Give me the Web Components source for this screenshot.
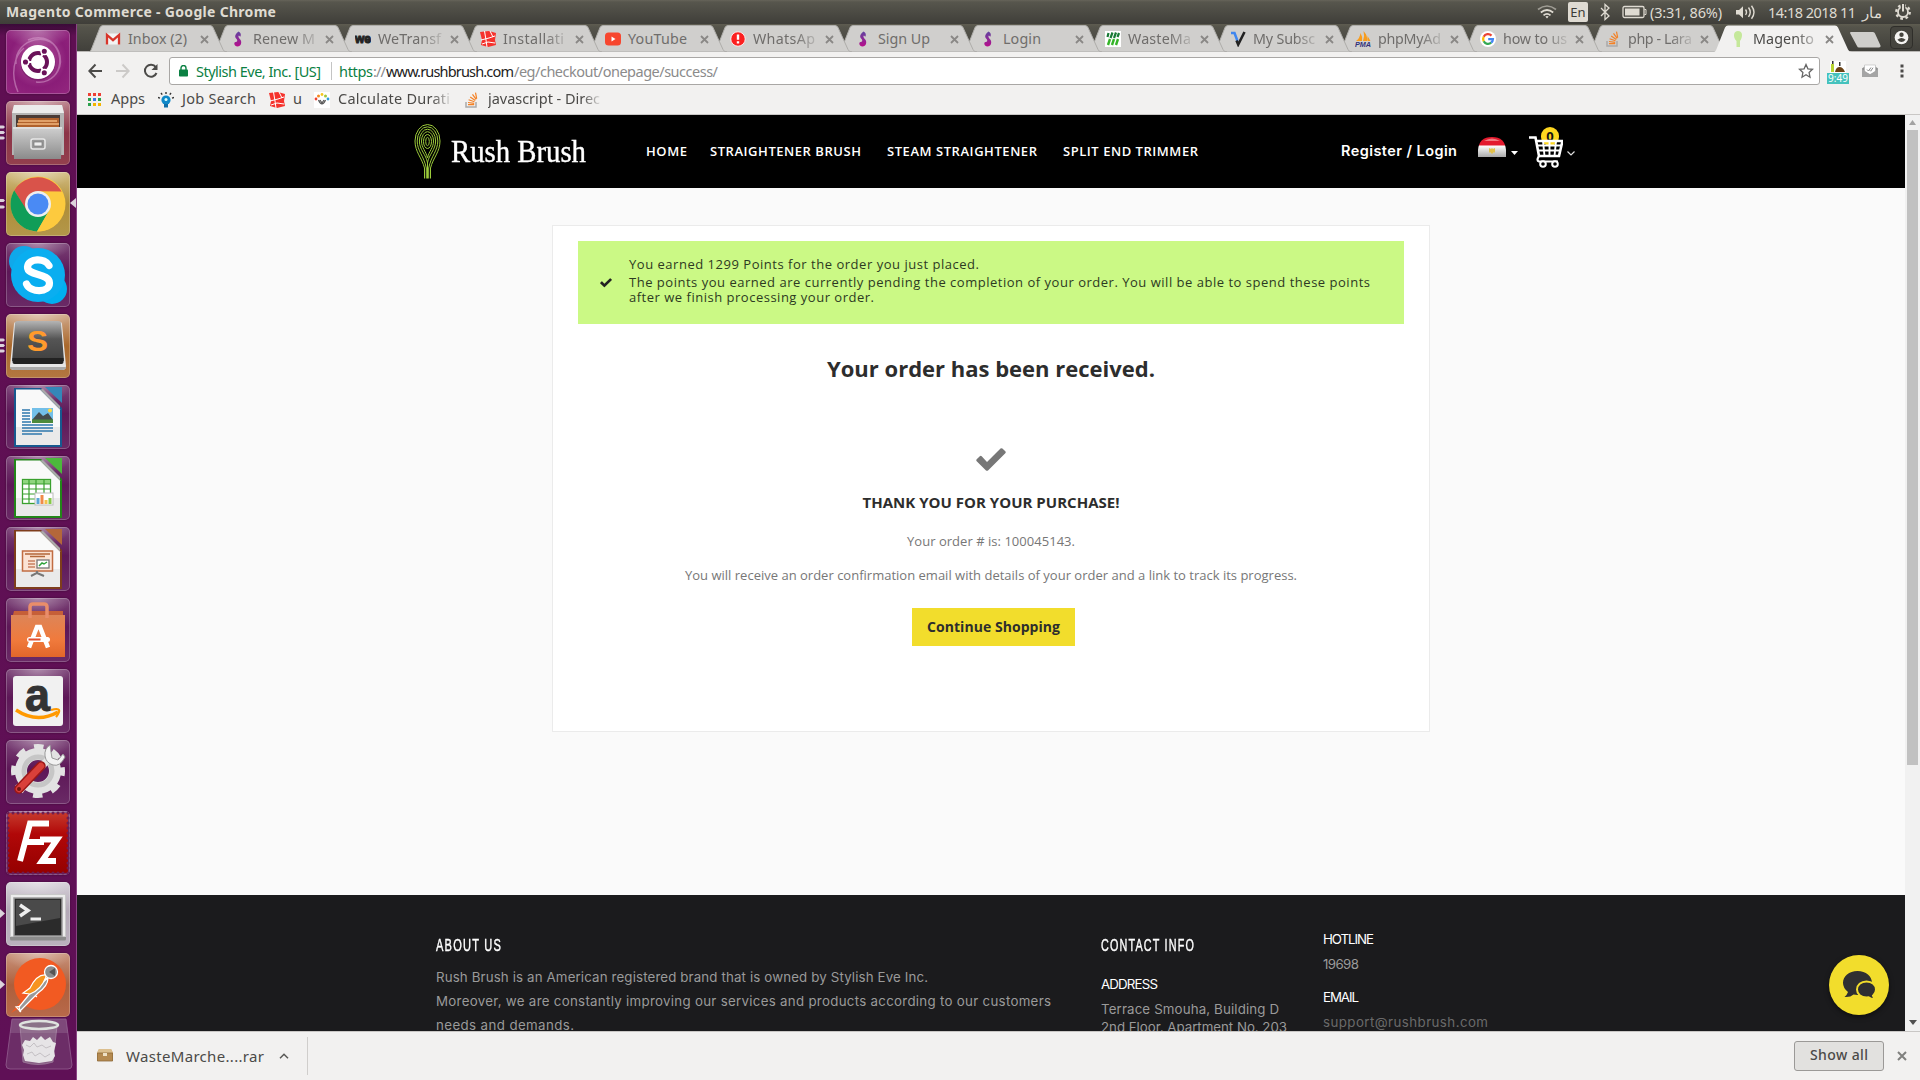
<!DOCTYPE html>
<html lang="en">
<head>
<meta charset="utf-8">
<title>Magento Commerce</title>
<style>
html,body{margin:0;height:100%;overflow:hidden}
body{font-family:"Noto Sans","Open Sans",sans-serif;background:#fafafa}
</style>
</head>
<body>
<desktop-shell></desktop-shell>
<script>
const def = (name, html, setup) => customElements.define(name, class extends HTMLElement {
  constructor() {
    super();
    this.attachShadow({mode: "open"}).innerHTML = html;
  }
  connectedCallback() { if (setup) setup(this, this.shadowRoot); }
});

/* ---------- shell ---------- */
def("desktop-shell", `
<style>
:host{display:flex;flex-direction:column;width:1920px;height:1080px;overflow:hidden}
.row{display:flex;flex:1;min-height:0}
.win{display:flex;flex-direction:column;flex:1;min-width:0}
.view{display:flex;flex:1;min-height:0;overflow:hidden}
.page{display:flex;flex-direction:column;flex:1;background:#fafafa;min-width:0}
main{height:707px;flex:none;display:flex;justify-content:center;align-items:flex-start;box-sizing:border-box;padding-top:37px}
</style>
<top-panel></top-panel>
<div class="row">
  <side-launcher></side-launcher>
  <div class="win">
    <tab-strip></tab-strip>
    <nav-toolbar></nav-toolbar>
    <bookmark-bar></bookmark-bar>
    <div class="view">
      <div class="page">
        <shop-header></shop-header>
        <main><order-card></order-card></main>
        <shop-footer></shop-footer>
      </div>
      <scroll-bar></scroll-bar>
    </div>
    <download-bar></download-bar>
  </div>
</div>`);

/* ---------- top panel ---------- */
def("top-panel", `
<style>
:host{display:flex;align-items:center;height:24px;flex:none;background:linear-gradient(#66645a 0,#57564d 2px,#3f3e39 24px);color:#dfdbd2;font-size:14.5px;line-height:24px}
svg{display:block;flex:none}
.t{margin-left:6px;font-weight:700;font-size:14px}
.en{margin-left:10px;width:20px;height:20px;border-radius:2px;background:#dfdbd2;color:#3c3b37;text-align:center;line-height:20px;font-size:13px}
</style>
<fit-text class="t" w="270">Magento Commerce - Google Chrome</fit-text>
<svg style="margin-left:1260px" width="22" height="24" viewBox="0 0 22 24" fill="none" stroke="#dfdbd2" stroke-width="1.700"><path d="M2 9.500Q11 2.500 20 9.500" opacity=".55"/><path d="M4.800 12.500Q11 7.500 17.200 12.500"/><path d="M7.500 15.300Q11 12.300 14.500 15.300"/><path d="M9.300 16.600L11 18.500 12.700 16.600Q11 15.200 9.300 16.600Z" fill="#dfdbd2" stroke="none"/></svg>
<div class="en"><span>En</span></div>
<svg style="margin-left:11px" width="12" height="24" viewBox="0 0 12 24" fill="none" stroke="#dfdbd2" stroke-width="1.300"><path d="M2 8l8 8-4 3.500V4.500L10 8 2 16"/></svg>
<svg style="margin-left:11px" width="26" height="24" viewBox="0 0 26 24"><rect x="1" y="6.500" width="21" height="11" rx="1.500" fill="none" stroke="#dfdbd2" stroke-width="1.300"/><rect x="3" y="8.500" width="14.500" height="7" fill="#dfdbd2"/><path d="M22.500 9.500h1.500v5h-1.500" stroke="#dfdbd2" fill="none"/></svg>
<fit-text style="margin-left:2px" w="72">(3:31, 86%)</fit-text>
<svg style="margin-left:13px" width="22" height="24" viewBox="0 0 22 24" fill="none" stroke="#dfdbd2" stroke-width="1.400"><path d="M1 10v4.500h3l4 3.800V6.200L4 10z" fill="#dfdbd2" stroke="none"/><path d="M10.500 9.500q2 2.700 0 5.400M13.500 7.500q3.500 4.700 0 9.400M16.500 5.700q5 6.500 0 13"/></svg>
<fit-text style="margin-left:11px" w="88">14:18 2018 11</fit-text>
<span style="margin-left:6px;width:21px;white-space:nowrap" lang="ar">مار</span>
<svg style="margin-left:10px" width="20" height="24" viewBox="0 0 20 24" fill="none" stroke="#dfdbd2"><circle cx="10" cy="12" r="6.700" stroke-width="2.400" stroke-dasharray="2.630 2.630"/><circle cx="10" cy="12" r="5" stroke-width="1.800"/><path d="M10 3.500v9" stroke="#4a4942" stroke-width="4.500"/><path d="M10 4v7.500" stroke-width="2"/></svg>`);

/* ---------- launcher ---------- */
def("launcher-tile", `
<style>
:host{display:block;position:relative;width:64px;height:64px;flex:none}
.b{width:64px;height:64px;border-radius:5px;background:var(--bg,linear-gradient(#7c4478,#5d1757 45%,#6a2a66));box-shadow:inset 0 0 0 1px rgba(255,255,255,.22),0 0 2px rgba(20,0,20,.5);overflow:hidden}
.g{position:absolute;inset:0;border-radius:5px;background:radial-gradient(ellipse 34px 18px at 50% 0,rgba(255,255,255,.38),rgba(255,255,255,0));}
::slotted(svg){position:relative;display:block}
.p{position:absolute;left:-7px;top:0;height:64px;width:7px}
.a{position:absolute;right:-6px;top:0}
</style>
<svg class="p" viewBox="0 0 7 64"></svg>
<div class="b"><div class="g"></div><slot></slot></div>
<svg class="a" width="6" height="64" viewBox="0 0 6 64"></svg>`, (el, r) => {
  const n = +el.getAttribute("pips") || 0;
  const ys = {0: [], 2: [28.500, 35], 3: [26, 31.500, 37]}[n];
  r.querySelector(".p").innerHTML = n === 1
    ? '<path d="M0 26v11l6-5.500z" fill="#dcd3dc"/>'
    : ys.map(y => `<path d="M0 ${y-1.6}h4.500l1.500 1.600-1.500 1.600H0z" fill="#dcd3dc"/>`).join("");
  if (el.hasAttribute("active")) r.querySelector(".a").innerHTML = '<path d="M6 26v10L0 31z" fill="#dcd3dc"/>';
});

const sheet = (c, d, inner) => `<svg width="64" height="64" viewBox="0 0 64 64"><path d="M8 3h27l21 20v39H8z" fill="${d}"/><path d="M10 4.500h24l20 20v35.500H10z" fill="#f9f9f9"/><path d="M10 42h44v18H10z" fill="#dcdcdc" opacity=".5"/><path d="M34 4.500l20 20v-3.500L37 4z" fill="#aaa"/><path d="M39 2h17v16z" fill="${c}"/>${inner}</svg>`;

def("side-launcher", `
<style>
:host{display:flex;flex-direction:column;gap:7px;width:77px;box-sizing:border-box;padding:6px 0 0 6px;background:linear-gradient(#3a0b38 0,#5f0f52 12px,#5f1056);border-right:1px solid #8b4484;flex:none;overflow:hidden}
text{font-family:"Liberation Sans",sans-serif}
.trash{margin:-6px 0 0 -2px;flex:none}
</style>
<launcher-tile style="--bg:radial-gradient(circle at 50% 45%,#b3569e,#8a1d78 60%,#94277f)">
 <svg width="64" height="64" viewBox="0 0 64 64"><path d="M10 34C8 8 48-2 54 26c3 16-10 28-24 26M22 10C44 0 62 24 50 44M12 62C4 44 8 26 18 18" fill="none" stroke="#dca6d2" stroke-opacity=".5" stroke-width="1.500"/><circle cx="32" cy="33" r="17.500" fill="#5a1050" opacity=".4"/><circle cx="32" cy="32" r="17" fill="#fff"/><circle cx="32" cy="32" r="9" fill="none" stroke="#6a1259" stroke-width="4"/><path d="M32 32H18M32 32l7.500-13M32 32l7.500 13" stroke="#fff" stroke-width="2"/><circle cx="32" cy="32" r="6.500" fill="#fff"/><g fill="#6a1259" stroke="#fff" stroke-width="1.500"><circle cx="19.500" cy="32" r="3.300"/><circle cx="38.300" cy="21.200" r="3.300"/><circle cx="38.300" cy="42.800" r="3.300"/></g></svg>
</launcher-tile>
<launcher-tile pips="3" style="--bg:linear-gradient(#b98089,#8c3447 50%,#93404e)">
 <svg width="64" height="64" viewBox="0 0 64 64"><defs><linearGradient id="f" x2="0" y2="1"><stop stop-color="#d0d0d0"/><stop offset="1" stop-color="#8b8b8b"/></linearGradient></defs><path d="M8 4h48l2 8v42H6V12z" fill="#b5b5b5"/><path d="M8 4h48l2 8H6z" fill="#ececec"/><path d="M10 14h44v14H10z" fill="#4a3b36"/><path d="M13 17h40v10H11z" fill="#b0612c"/><path d="M12 20h39M11 23h42" stroke="#f0b57c" stroke-width="1.500"/><path d="M7 26h49l-1 32H8z" fill="url(#f)"/><path d="M7 27h49" stroke="#eee"/><rect x="25" y="38" width="14" height="10" rx="2" fill="#999" stroke="#e8e8e8" stroke-width="1.500"/><rect x="28" y="41" width="8" height="4" fill="#eee" stroke="#777" stroke-width=".7"/></svg>
</launcher-tile>
<launcher-tile pips="2" active style="--bg:linear-gradient(#d3bd84,#ae8d38 50%,#b3974a)">
 <svg width="64" height="64" viewBox="0 0 64 64"><circle cx="32" cy="32" r="27.500" fill="#fdca3e"/><path d="M8.200 18.200A27.500 27.500 0 0 1 55.800 20L32 19.500 20 38.500z" fill="#d9534a"/><path d="M8.200 18.200A27.500 27.500 0 0 0 31 59.500L43 39 32 44 21 38.500z" fill="#109d58"/><path d="M32 19.500h23.800A27.500 27.500 0 0 1 31 59.500L43 38.500z" fill="#fdca3e"/><circle cx="32" cy="32" r="13" fill="#efefef"/><circle cx="32" cy="32" r="10.500" fill="#4a8af4"/></svg>
</launcher-tile>
<launcher-tile>
 <svg width="64" height="64" viewBox="0 0 64 64"><circle cx="18" cy="18" r="15" fill="#10a8ea"/><circle cx="46" cy="46" r="15" fill="#00aff0"/><circle cx="32" cy="32" r="27" fill="#0aaef0"/><path d="M43 22.500C39 14.500 22.500 15 21.500 24c-.3 9 22 6 22 16 0 10-19 10-23 1" fill="none" stroke="#fff" stroke-width="7.200" stroke-linecap="round"/></svg>
</launcher-tile>
<launcher-tile pips="3" style="--bg:linear-gradient(#d0a88a,#a9682c 50%,#b37741)">
 <svg width="64" height="64" viewBox="0 0 64 64"><defs><linearGradient id="s" x2="0" y2="1"><stop stop-color="#b4b4b4"/><stop offset=".45" stop-color="#555"/><stop offset="1" stop-color="#404040"/></linearGradient></defs><path d="M8 10q0-2 2-2h44q2 0 2 2l4 42q0 4-4 4H8q-4 0-4-4z" fill="#e6e6e6"/><path d="M4 53h56q0 3-4 3H8q-4 0-4-3" fill="#aaa"/><path d="M12 7h40q3 0 3 2l3 38H6L9 9q0-2 3-2z" fill="url(#s)"/><path d="M6.500 44h51v4q0 2-2 2h-47q-2 0-2-2z" fill="#222"/><text x="21" y="36.500" font-size="29" font-weight="700" fill="#ff9a2c" textLength="21" lengthAdjust="spacingAndGlyphs">S</text></svg>
</launcher-tile>
<launcher-tile>${sheet("#3487b8","#17598f",`<path d="M16 25h8M16 28h8M16 31h8M16 34h8M16 37h9M16 40h31M16 43h31M16 46h31M16 49h20" stroke="#2f78ad" stroke-width="1.500"/><rect x="26" y="23" width="21" height="14" fill="#73bfe8"/><path d="M26 35l7-8 4 4 5-3 5 7z" fill="#454c4c"/><path d="M26 34.500h21V38H26z" fill="#4c8a3c"/><circle cx="44" cy="25.500" r="2" fill="#ffd840"/>`)}</launcher-tile>
<launcher-tile>${sheet("#4cb83c","#23851a",`<rect x="16.500" y="23.500" width="28" height="24" fill="#fff" stroke="#3aa02e" stroke-width="1.300"/><path d="M17 24h27v4H17z" fill="#8fd57e"/><path d="M16 28h29M16 33h29M16 38h29M16 43h29M23 23v25M30 23v25M38 23v25" stroke="#3aa02e" stroke-width="1.200"/><rect x="29" y="37" width="18" height="12" fill="#fff" stroke="#bbb"/><path d="M32 48v-6" stroke="#5ba5d8" stroke-width="3"/><path d="M36 48v-9" stroke="#f08a4a" stroke-width="3"/><path d="M40 48v-4" stroke="#f3c14b" stroke-width="3"/><path d="M44 48v-6" stroke="#86c84a" stroke-width="3"/>`)}</launcher-tile>
<launcher-tile>${sheet("#b4673a","#7e3d1c",`<rect x="16.500" y="24" width="30" height="20" fill="#fbe3d5" stroke="#c16c42" stroke-width="1.500"/><path d="M19 27h25M24 29.500h15" stroke="#b4673a" stroke-width="1.500"/><path d="M22 34h7M22 37h7M22 40h7" stroke="#c98060" stroke-width="1.500"/><rect x="31" y="33" width="12" height="8" fill="#fff" stroke="#777" stroke-width="1.300"/><path d="M33 39l3-3 2 1 3-2" stroke="#2fa23a" stroke-width="1.500" fill="none"/><path d="M31 44v2l-6 3M31 46l7 3" stroke="#777" stroke-width="2" fill="none"/>`)}</launcher-tile>
<launcher-tile>
 <svg width="64" height="64" viewBox="0 0 64 64"><defs><linearGradient id="o" x2="0" y2="1"><stop stop-color="#dd8558"/><stop offset=".6" stop-color="#f07a3c"/><stop offset="1" stop-color="#e2662a"/></linearGradient></defs><path d="M8 13h49v8H6z" fill="#c65f38"/><path d="M5 17h54v42H5z" fill="url(#o)"/><path d="M24 20V9q0-3 3-3h11q3 0 3 3v11" fill="none" stroke="#e98d6a" stroke-width="3.500"/><path d="M23 49.500l8-20.500h3l8 20.500" stroke="#fff" stroke-width="4.500" fill="none"/><rect x="21" y="39" width="23" height="5" rx="2.500" fill="#fff"/><path d="M22.500 41.500h12" stroke="#e04f30" stroke-width="2.200"/></svg>
</launcher-tile>
<launcher-tile>
 <svg width="64" height="64" viewBox="0 0 64 64"><rect x="7" y="7" width="50" height="50" rx="3" fill="#f1f1f1"/><text x="19" y="41.500" font-size="47" font-weight="700" fill="#333" stroke="#333" textLength="25" lengthAdjust="spacingAndGlyphs">a</text><path d="M10 41q21 14 42 2" fill="none" stroke="#ff9900" stroke-width="3.500"/><path d="M45 41q7-2 8 0t-3 7" fill="none" stroke="#ff9900" stroke-width="2.200"/></svg>
</launcher-tile>
<launcher-tile>
 <svg width="64" height="64" viewBox="0 0 64 64"><circle cx="32" cy="31" r="17" fill="none" stroke="#e2e2e2" stroke-width="12"/><circle cx="32" cy="31" r="24" fill="none" stroke="#e2e2e2" stroke-width="6" stroke-dasharray="9.425 9.425" stroke-dashoffset="4.700"/><circle cx="32" cy="31" r="14" fill="none" stroke="#c6c6c6" stroke-width="5"/><path d="M35 27l9-9" stroke="#e4e4e4" stroke-width="7"/><path d="M44 5q-6 4-5 11t8 9 12-8l-2-3-5 6-6-2-1-6z" fill="#f2f2f2" stroke="#999" stroke-width="1"/><path d="M13 49l22-23" stroke="#9c1717" stroke-width="9.500" stroke-linecap="round"/><path d="M13 49l22-23" stroke="#d9403a" stroke-width="6.500" stroke-linecap="round"/><circle cx="13" cy="49" r="2" fill="#6e1414"/></svg>
</launcher-tile>
<launcher-tile>
 <svg width="64" height="64" viewBox="0 0 64 64"><defs><linearGradient id="z" x2="0" y2="1"><stop stop-color="#c5392c"/><stop offset=".35" stop-color="#b10808"/><stop offset="1" stop-color="#950000"/></linearGradient></defs><rect x="2" y="2" width="60" height="60" fill="url(#z)"/><rect x="2" y="2" width="60" height="60" fill="none" stroke="#6e1c50" stroke-width="3" stroke-linecap="round" stroke-dasharray="0 5"/><path d="M14 50L24 12.500H43M20 31H38M34 28.500H51L36 50H50" fill="none" stroke="#fff" stroke-width="6"/></svg>
</launcher-tile>
<launcher-tile pips="1" style="--bg:linear-gradient(#d6d0d8,#b3a9b7 45%,#bbb1be)">
 <svg width="64" height="64" viewBox="0 0 64 64"><rect x="4" y="12" width="56" height="46" rx="1.500" fill="#c9c9c9"/><path d="M4 55h56v2q0 1.500-1.500 1.500h-53Q4 58.500 4 57z" fill="#8c8c8c"/><rect x="5" y="13" width="54" height="41" fill="#ececec"/><rect x="8" y="16" width="48" height="38" fill="#2b2b2b" stroke="#9a9a9a" stroke-width="1.500"/><path d="M10 18h44v18L10 44z" fill="#4a4a4a"/><path d="M14 23l8 5.500-8 5.500" fill="none" stroke="#eee" stroke-width="3.500"/><path d="M24.500 37h10.500" stroke="#eee" stroke-width="3"/></svg>
</launcher-tile>
<launcher-tile pips="1" style="--bg:linear-gradient(#c9957e,#ad5f3c 50%,#b8694a)">
 <svg width="64" height="64" viewBox="0 0 64 64"><circle cx="34" cy="31" r="26" fill="#f25a22"/><path d="M5 60l14-16 6 4z" fill="#f25a22"/><path d="M41 25L27 41 16 53l-6 1 5 5M27 41l4 3" fill="none" stroke="#fff" stroke-width="1.200"/><path d="M42 25q0 8-10 15L14 58l-1-4 13-16z" fill="#999" stroke="#fff" stroke-width="1.200"/><path d="M40 22q-9-1-16 13l-7 5 7 1q11-4 16-17z" fill="#f7941e" stroke="#fff" stroke-width="1.200"/><circle cx="45" cy="19" r="6.500" fill="#8c8c8c" stroke="#fff" stroke-width="1.300"/><path d="M43 19l6-4v8z" fill="#555"/></svg>
</launcher-tile>
<svg class="trash" width="70" height="52" viewBox="0 0 70 52"><path d="M8 1h54l6 46q0 4-4 4H6q-4 0-4-4z" fill="#6c2d67" stroke="#8a5286"/><path d="M8 1h54l2 14H6z" fill="#9a7098" opacity=".4"/><path d="M16 8l3 36q15 5 30 0l4-36" fill="#a99aa8" opacity=".45" stroke="#ddd" stroke-width=".8"/><path d="M18 27l3-5 5 1 3-4 4 3 4-4 4 4 5-3 3 5 3 1-2 8 1 5-3 5-13 2-14-2-2-6 1-5z" fill="#e6e4e6"/><path d="M22 27l4 2 4-4 3 4 5-2 4 3 5-2M23 36l5-2 3 4 5-3 5 4 5-3" fill="none" stroke="#c4c0c4" stroke-width="1"/><ellipse cx="35" cy="7" rx="19" ry="4" fill="#8a7388" stroke="#dfe3df" stroke-width="2.500"/></svg>`);

/* ---------- tabs ---------- */
def("browser-tab", `
<style>
:host{display:flex;position:relative;width:138px;height:28px;margin-right:-13px;flex:none;color:#6f6d6b;font-size:14.300px}
:host([active]){color:#4b4a48}
.s{position:absolute;inset:0}
.c{position:relative;display:flex;align-items:center;height:28px;padding:1px 0 0 16px;box-sizing:border-box}
.i{width:16px;height:16px;margin-right:7px;flex:none}
.n{width:66px;line-height:28px;height:28px}
.n.fade{-webkit-mask-image:linear-gradient(90deg,#000 64%,rgba(0,0,0,.25) 95%)}
.x{margin:1px 0 0 6px;flex:none}
::slotted(svg){display:block}
</style>
<svg class="s" width="138" height="28" viewBox="0 0 138 28"><path class="bg" d="M0 28C1 28 2 26 2.500 25L11 3.500Q12 1.500 14 1.500H121Q123 1.500 124 3.500L134 25.500Q135 28 138 28z"/></svg>
<div class="c"><div class="i"><slot></slot></div><div class="n"></div>
<svg class="x" width="9" height="9" viewBox="0 0 9 9"><path d="M1 1l7 7M8 1L1 8" stroke="#8a8886" stroke-width="1.800"/></svg></div>`, (el, r) => {
  const b = r.querySelector(".bg"), act = el.hasAttribute("active");
  b.setAttribute("fill", act ? "#f2f1f0" : "#d0cfcd");
  b.setAttribute("stroke", act ? "none" : "#aeadaa");
  const n = r.querySelector(".n");
  n.innerHTML = `<fit-text w="${el.getAttribute("span")}">${el.getAttribute("label")}</fit-text>`;
  if (el.hasAttribute("fade")) n.classList.add("fade");
});

const svg16 = s => `<svg width="16" height="16" viewBox="0 0 16 16">${s}</svg>`;
const ico = {
  gmail: svg16('<rect x="1" y="2.500" width="14" height="11" fill="#f3f3f3"/><path d="M2 13.500V4l6 5.200L14 4v9.500" fill="none" stroke="#d8352b" stroke-width="2.300"/>'),
  eve: svg16('<defs><linearGradient id="e" x2="0" y2="1"><stop stop-color="#5f45a0"/><stop offset="1" stop-color="#b80d8c"/></linearGradient></defs><path d="M8.500 .5C5 3.500 4.200 5.500 6.500 8c1.500 1.700.5 3-1 3C3.500 11 4 15.500 7.500 15.500 11 15.500 12.500 11 10 8.200 8.300 6.300 8 5 9 4.500l1.300 1.200C11.500 4 10.800 1.500 8.500 .5z" fill="url(#e)"/>'),
  we: '<svg width="16" height="16" viewBox="0 0 16 16"><text x="0" y="11.500" font-family="Liberation Sans" font-weight="700" font-size="12.500" fill="#222" stroke="#222" stroke-width="1" textLength="16" lengthAdjust="spacingAndGlyphs">we</text></svg>',
  lara: svg16('<path d="M0 1l9-1 7 2-1 7 1 5-8 2-7-2 1-5z" fill="#f5322c"/><path d="M4.500 0L6 9l1 7M1 9l8-2 6-2M10 0l3 6M2 13l6-2 7 1" stroke="#fff" stroke-width="1" fill="none"/>'),
  yt: svg16('<rect x="0" y="1.500" width="16" height="13" rx="3.500" fill="#f7462e"/><path d="M6.500 5.500v5l4-2.500z" fill="#fff"/>'),
  warn: svg16('<circle cx="8" cy="8" r="7.200" fill="#fb2020" stroke="#fff" stroke-width=".8"/><path d="M8 3.500v5.300M8 10.300v2.300" stroke="#fff" stroke-width="2.400"/>'),
  waste: svg16('<rect width="16" height="16" fill="#fff"/><path d="M3.500 2L2.500 6M7.500 1.500L5.500 7M11 1.500L9 7M14 2l-1.500 4" fill="none" stroke="#187a35" stroke-width="2.200"/><path d="M5 8l-2 6M9 8l-2 6M13 8l-2 6" fill="none" stroke="#35b528" stroke-width="2.400"/>'),
  v: svg16('<path d="M1 2h3.500l3 8" fill="none" stroke="#3f86ef" stroke-width="2.500"/><path d="M6.500 9.500l1.700 4L14.500 1" fill="none" stroke="#222" stroke-width="2.600"/>'),
  pma: '<svg width="16" height="16" viewBox="0 0 16 16"><path d="M1 10Q5 7 5.500 2 8 6 7 10zM8 10Q10 5 8.500 0 13 5 12 10zM12.500 10V5l3 5z" fill="#f89c1c"/><text x="0" y="16" font-family="Liberation Sans" font-style="italic" font-weight="700" font-size="7.500" fill="#33327a" textLength="16" lengthAdjust="spacingAndGlyphs">PMA</text></svg>',
  g: svg16('<circle cx="8" cy="8" r="8" fill="#fff"/><g fill="none" stroke-width="2.300"><path d="M11.500 4.600A4.900 4.900 0 0 0 3.700 5.700" stroke="#ea4335"/><path d="M3.700 5.700a4.900 4.900 0 0 0 0 4.600" stroke="#fbbc05"/><path d="M3.700 10.300a4.900 4.900 0 0 0 7.500 1.400" stroke="#34a853"/><path d="M11.200 11.700A4.900 4.900 0 0 0 12.900 8.200H8.200" stroke="#4285f4"/></g>'),
  so: svg16('<path d="M2 10v5h10v-5" fill="none" stroke="#a9a9a9" stroke-width="1.500"/><path d="M4 12.700h6.200M4 10.500l6.200.8M4.600 7.800l5.900 1.900M6.200 4.900l5.100 3.500M8.500 2.300l3.700 5M11.500.6l1.200 6" stroke="#f48024" stroke-width="1.200"/>'),
  leaf: svg16('<path d="M8 0c5 0 5 6 2 10V16H6.500v-6C2.500 6 3.500 0 8 0z" fill="#c5e89a"/>'),
};
def("tab-strip", `
<style>
:host{display:flex;align-items:flex-start;height:28px;flex:none;padding:0 0 0 12px;background:linear-gradient(#5e5c50,#55544b 3px,#403f3a);border-bottom:1px solid #f2f1f0;box-shadow:inset 0 -1px 0 #bab8b5}
.nt{margin:8px 0 0 10px;flex:none}
.u{margin:2px 0 0 7px;width:23px;height:23px;border:1px solid #2f2e2a;border-radius:4px;box-sizing:border-box;background:#45443e;flex:none}
</style>` +
[["gmail","Inbox (2)",59],["eve","Renew M",62,1],["we","WeTransf",63,1],["lara","Installati",61,1],["yt","YouTube",59],["warn","WhatsAp",62,1],["eve","Sign Up",52],["eve","Login",38],["waste","WasteMa",63,1],["v","My Subsc",62,1],["pma","phpMyAd",63,1],["g","how to us",64,1],["so","php - Lara",64,1],["leaf","Magento",61,1]]
.map(([i,l,w,f],k)=>`<browser-tab label="${l}" span="${w}"${f?" fade":""}${k==13?' active style="z-index:30"':` style="z-index:${20-k}"`}>${ico[i]}</browser-tab>`).join("") + `
<svg class="nt" width="34" height="16" viewBox="0 0 34 16"><path d="M1 1q0-1 1-1h22q1.500 0 2 1.500l5.500 12q.5 2-1.500 2H10Q8.500 15.500 8 14z" fill="#cfcecb"/></svg>
<svg class="u" viewBox="0 0 23 23"><circle cx="11.500" cy="11.500" r="7.500" fill="#f4f3f1"/><circle cx="11.500" cy="8.500" r="2.400" fill="#45443e"/><path d="M7 14q4.500-4 9 0-4.500 5-9 0" fill="#45443e"/></svg>`);

/* ---------- toolbar ---------- */
def("nav-toolbar", `
<style>
:host{display:flex;align-items:center;height:32px;flex:none;background:#f2f1f0;padding-left:11px;box-sizing:border-box;font-size:14.500px;position:relative}
svg{display:block;flex:none}
.o{margin-left:10px;width:1651px;height:28px;margin-top:4px;box-sizing:border-box;border:1px solid #a9a7a5;border-radius:3px;background:#fff;display:flex;align-items:center;line-height:26px;flex:none}
.o fit-text{margin-top:-1px}
.bt{margin-top:3px}
.e{margin:7px 0 0 7px;width:22px;height:23px;display:flex;flex-direction:column;align-items:center;flex:none}
.e b{font-weight:400;background:#45c2bd;color:#fff;font-size:10px;line-height:11px;height:11px;width:22px;text-align:center}
</style>
<svg class="bt" width="14" height="16" viewBox="0 0 14 16" fill="none" stroke="#4c4b49" stroke-width="2"><path d="M14 8H1.500M7.500 1.500L1.300 8l6.200 6.500"/></svg>
<svg class="bt" style="margin-left:14px" width="14" height="16" viewBox="0 0 14 16" fill="none" stroke="#cccac8" stroke-width="2"><path d="M0 8h12.500M6.500 1.500L12.700 8l-6.200 6.500"/></svg>
<svg class="bt" style="margin-left:13px" width="16" height="16" viewBox="0 0 16 16"><path d="M12.800 4.200A6 6 0 1 0 13.500 10" fill="none" stroke="#4c4b49" stroke-width="2"/><path d="M14.500 1v6h-6z" fill="#4c4b49"/></svg>
<div class="o">
 <svg style="margin-left:9px" width="9" height="12" viewBox="0 0 9 12"><rect y="4.500" width="9" height="7" rx=".8" fill="#0b8043"/><path d="M2 5V3a2.500 2.500 0 0 1 5 0v2" fill="none" stroke="#0b8043" stroke-width="1.400"/></svg>
 <fit-text style="margin-left:8px;color:#0b8043" w="125">Stylish Eve, Inc. [US]</fit-text>
 <span style="margin-left:10px;width:1px;height:18px;background:#c4c4c4"></span>
 <fit-text style="margin-left:7px;color:#0b8043" w="34">https</fit-text><fit-text style="color:#8b8b8b" w="13">://</fit-text><fit-text style="color:#222" w="128">www.rushbrush.com</fit-text><fit-text style="color:#8b8b8b" w="204">/eg/checkout/onepage/success/</fit-text>
 <svg style="margin-left:1080px" width="16" height="16" viewBox="0 0 16 16"><path d="M8 1.500l1.900 4.300 4.600.5-3.400 3.200.9 4.700L8 11.800l-4 2.400.9-4.700L1.500 6.300l4.600-.5z" fill="none" stroke="#666" stroke-width="1.300"/></svg>
</div>
<div class="e"><svg width="16" height="12" viewBox="0 0 16 12"><rect width="16" height="12" fill="#fff"/><path d="M1 3h3v8H1z" fill="#b9d532"/><path d="M2 0h1.500v3H2zM9 1h1.500v4H9z" fill="#333"/><path d="M5 11q1-5 4.500-5t5.500 5z" fill="#6b4316"/></svg><b>9:49</b></div>
<svg style="margin:4px 0 0 13px" width="16" height="14" viewBox="0 0 16 14"><path d="M0 4.500L4 1.500h8l4 3V13H0z" fill="#8f8f8f"/><path d="M2.500 1h11v7L8 10.500 2.500 8z" fill="#fff" stroke="#aaa" stroke-width=".5"/><path d="M5 5.500l1.500 1.500 2.500-3.500M8 6.500l.7.700 2.300-3.500" fill="none" stroke="#888"/><path d="M0 5l8 5.500L16 5v8H0z" fill="#a5a5a5"/></svg>
<svg style="margin:4px 0 0 22px" width="4" height="14" viewBox="0 0 4 14"><path d="M.5 .5h3v3h-3zM.5 5.500h3v3h-3zM.5 10.500h3v3h-3z" fill="#4c4b49"/></svg>`);

/* ---------- bookmarks ---------- */
def("bookmark-bar", `
<style>
:host{display:flex;align-items:center;height:30px;flex:none;box-sizing:border-box;background:#f2f1f0;border-bottom:1px solid #c9c7c5;padding-left:11px;font-size:14.500px;color:#4b4a48;line-height:27px}
svg{display:block;flex:none}
fit-text{margin-top:-2px}
.f{-webkit-mask-image:linear-gradient(90deg,#000 84%,rgba(0,0,0,.15))}
</style>
<svg width="13" height="13" viewBox="0 0 13 13"><path d="M0 1.500h13" stroke="#ee4035" stroke-width="3" stroke-dasharray="3 2"/><path d="M0 6.500h3M10 6.500h3M0 11.500h3" stroke="#2ba24c" stroke-width="3"/><path d="M5 6.500h3" stroke="#3b78e7" stroke-width="3"/><path d="M5 11.500h3M10 11.500h3" stroke="#f4b400" stroke-width="3"/></svg>
<fit-text style="margin-left:10px" w="34">Apps</fit-text>
<svg style="margin-left:13px" width="16" height="16" viewBox="0 0 16 16"><path d="M8 0v2M3 1l1.200 1.700M13 1l-1.200 1.700M0 5.500l2 .6M16 5.500l-2 .6" stroke="#333" stroke-width="1.400"/><circle cx="8" cy="8" r="4.600" fill="#0f88c8"/><path d="M6 12h4v3.500H6z" fill="#0f6ea8"/><circle cx="8" cy="7.500" r="1.500" fill="#dff"/></svg>
<fit-text style="margin-left:8px" w="74">Job Search</fit-text>
<span style="margin-left:13px">${ico.lara}</span>
<fit-text style="margin-left:8px" w="8">u</fit-text>
<svg style="margin-left:13px" width="16" height="16" viewBox="0 0 16 16"><rect width="16" height="16" fill="#fff"/><path d="M4.500 8q3.500 8 7 0M6 8l2 3 2-3" fill="none" stroke="#555" stroke-width="1.200"/><circle cx="2" cy="7" r="1.400" fill="#ef4130"/><circle cx="4.500" cy="4" r="1.500" fill="#f58a1f"/><circle cx="8" cy="2.500" r="1.400" fill="#f5c71f"/><circle cx="11.500" cy="4" r="1.500" fill="#a4c639"/><circle cx="14" cy="7" r="1.400" fill="#2ba0dc"/></svg>
<fit-text class="f" style="margin-left:8px" w="112">Calculate Durati</fit-text>
<span style="margin-left:14px">${ico.so}</span>
<fit-text class="f" style="margin-left:8px" w="112">javascript - Direc</fit-text>`);

/* ---------- shop header ---------- */
def("shop-header", `
<style>
:host{display:flex;align-items:center;height:73px;flex:none;background:#000;color:#fff;box-sizing:border-box;padding-left:337px;font:600 13px/20px "Open Sans",sans-serif}
svg{display:block;flex:none}
.n{margin-top:-2px}
.logo{font:400 31px/34px "Liberation Serif",serif;margin:0 0 0 10px;-webkit-text-stroke:.4px #fff}
.cart{position:relative;width:34px;height:40px;margin:-4px 0 0 9px;flex:none}
.bd{position:absolute;left:12px;top:-3px;width:18px;height:19px;border-radius:9px;background:#fdd61f;color:#111;font:700 13px/19px "Open Sans";text-align:center}
.cart svg{position:absolute;left:0;top:6px}
</style>
<svg style="margin-top:-1px" width="27" height="55" viewBox="0 0 27 55" fill="none" stroke="#9ccb3b" stroke-width="1"><path d="M10.500 54.500V44C8 34 1 28 1 17A12.500 16.500 0 0 1 26 17C26 28 19 34 16.500 44V54.500M12.300 54.500V44C10 32 3.200 27 3.200 17A10.300 14.200 0 0 1 23.800 17C23.800 27 17 32 14.700 44V54.500M13.500 54.500V39C12 30 5.400 26 5.400 17A8.100 11.800 0 0 1 21.600 17C21.600 26 15 30 13.500 39M13.500 34C12 27 7.500 24 7.500 17A6 9.300 0 0 1 19.500 17C19.500 24 15 27 13.500 34"/><ellipse cx="13.500" cy="17.500" rx="4" ry="7"/><ellipse cx="13.500" cy="17.500" rx="1.800" ry="4.200"/></svg>
<fit-text class="logo" w="135" scale>Rush Brush</fit-text>
<fit-text class="n" style="margin-left:60px" w="41">HOME</fit-text>
<fit-text class="n" style="margin-left:23px" w="151">STRAIGHTENER BRUSH</fit-text>
<fit-text class="n" style="margin-left:26px" w="150">STEAM STRAIGHTENER</fit-text>
<fit-text class="n" style="margin-left:26px" w="135">SPLIT END TRIMMER</fit-text>
<fit-text class="n" style="margin-left:143px;font-family:Inter;font-size:14.500px" w="116">Register / Login</fit-text>
<svg style="margin:-9px 0 0 21px" width="28" height="20" viewBox="0 0 28 20"><defs><clipPath id="fc"><path d="M0 20V13Q1 0 14 0T28 13V20z"/></clipPath><linearGradient id="fl" x2="0" y2="1"><stop stop-color="#fff"/><stop offset="1" stop-color="#aaa"/></linearGradient></defs><g clip-path="url(#fc)"><path d="M0 0h28v9H0z" fill="#e3192d"/><path d="M6 4q8-5 16 0z" fill="#f07a80"/><path d="M0 8.500h28V20H0z" fill="url(#fl)"/><path d="M11 11l2 1 1-1 1 1 2-1v5l-1-1-2 2-2-2-1 1z" fill="#e2c14c"/></g></svg>
<svg style="margin:3px 0 0 5px" width="7" height="4" viewBox="0 0 7 4"><path d="M0 0h7L3.500 4z" fill="#fff"/></svg>
<div class="cart" style="margin-left:11px"><div class="bd">0</div><svg width="34" height="32" viewBox="0 0 34 32"><path d="M0 1.500h6.500L10 20H30L33.500 5H8" fill="none" stroke="#fff" stroke-width="2.600"/><path d="M8.500 9.500h24M9.300 14.500h22M14 5l1.500 15M20.500 5v15M27 5l-1.500 15" stroke="#fff" stroke-width="1.900" fill="none"/><path d="M10 20q-3 4.500 0 5.500h19" fill="none" stroke="#fff" stroke-width="2.200"/><circle cx="14" cy="28" r="2.800" fill="#000" stroke="#fff" stroke-width="2"/><circle cx="26" cy="28" r="2.800" fill="#000" stroke="#fff" stroke-width="2"/></svg></div>
<svg style="margin:3px 0 0 4px" width="8" height="5" viewBox="0 0 8 5"><path d="M.5 .5L4 4 7.500 .5" fill="none" stroke="#ddd" stroke-width="1.200"/></svg>`);

/* ---------- order card ---------- */
const tick = (w, h, c) => `<svg width="${w}" height="${h}" viewBox="0 0 30 23"><path d="M3.800 8.200L.7 11.300Q-.2 12.200 .7 13.200L10 22.400Q11 23.300 12 22.400L29.300 5.200Q30.200 4.200 29.300 3.300L26.400.6Q25.400-.3 24.500.6L11 13.900 5.700 8.200Q4.700 7.300 3.800 8.200z" fill="${c}"/></svg>`;
def("order-notice", `
<style>
:host{display:flex;align-self:stretch;height:83px;box-sizing:border-box;background:#cbf985;color:#2d3a22;font:13px/15px "Open Sans",sans-serif;padding:16px 0 0 22px}
svg{display:block;margin-top:21px;width:12px}
.m{display:flex;flex-direction:column;margin-left:17px}
</style>
${tick(12,9.500,"#222")}
<div class="m"><slot></slot></div>`);
def("order-card", `
<style>
:host{display:flex;flex-direction:column;align-items:center;width:878px;height:507px;box-sizing:border-box;border:1px solid #ebebeb;background:#fff;padding:15px 25px;font:13px/20px "Open Sans",sans-serif;color:#777}
svg{display:block}
h1,h2,p{margin:0;font:inherit}
h1{font:700 22px/30px "Open Sans";color:#2d2d2d;margin-top:29px}
h2{font:700 15px/20px "Open Sans";color:#2d2d2d;margin-top:21px}
button{display:flex;justify-content:center;align-items:center;width:163px;height:38px;border:0;padding:0;background:#f2dd2c;color:#2d2d2d;font:700 14px/20px "Open Sans";margin:23px 0 0 5px}
</style>
<order-notice>
 <fit-text w="350">You earned 1299 Points for the order you just placed.</fit-text>
 <fit-text w="741" style="margin-top:3px">The points you earned are currently pending the completion of your order. You will be able to spend these points</fit-text>
 <fit-text w="245">after we finish processing your order.</fit-text>
</order-notice>
<h1><fit-text w="328">Your order has been received.</fit-text></h1>
<div style="margin-top:65px">${tick(30,23,"#777")}</div>
<h2><fit-text w="257">THANK YOU FOR YOUR PURCHASE!</fit-text></h2>
<p style="margin-top:19px"><fit-text w="168">Your order # is: 100045143.</fit-text></p>
<p style="margin-top:14px"><fit-text w="612">You will receive an order confirmation email with details of your order and a link to track its progress.</fit-text></p>
<button><fit-text w="133">Continue Shopping</fit-text></button>`);

/* ---------- footer ---------- */
def("shop-footer", `
<style>
:host{display:flex;position:relative;flex:1;min-height:0;overflow:hidden;background:#1b1b1d;padding-left:359px;font:13.300px/18px Inter,sans-serif;color:#9a9a9a}
.c{display:flex;flex-direction:column;flex:none}
.h{font:400 16.500px/20px "Liberation Sans Narrow","Liberation Sans",sans-serif;color:#fff;margin-top:40px;letter-spacing:1.800px;-webkit-text-stroke:.4px #fff}
.w{color:#fff}
.chat{position:absolute;left:1752px;top:60px;width:60px;height:60px;border-radius:50%;background:#f2dd2c;box-shadow:0 2px 5px rgba(0,0,0,.5)}
</style>
<div class="c" style="width:665px"><fit-text class="h" w="66" scale>ABOUT US</fit-text>
<fit-text style="margin-top:13px" w="492">Rush Brush is an American registered brand that is owned by Stylish Eve Inc.</fit-text>
<fit-text style="margin-top:6px" w="615">Moreover, we are constantly improving our services and products according to our customers</fit-text>
<fit-text style="margin-top:6px" w="138">needs and demands.</fit-text></div>
<div class="c" style="width:222px"><fit-text class="h" w="94" scale>CONTACT INFO</fit-text>
<fit-text class="w" style="margin-top:20px" w="57">ADDRESS</fit-text>
<fit-text style="margin-top:7px" w="178">Terrace Smouha, Building D</fit-text>
<fit-text w="186">2nd Floor, Apartment No. 203</fit-text></div>
<div class="c"><fit-text class="w" style="margin-top:35px" w="51">HOTLINE</fit-text>
<fit-text style="margin-top:7px" w="36">19698</fit-text>
<fit-text class="w" style="margin-top:15px" w="36">EMAIL</fit-text>
<fit-text style="margin-top:7px;color:#6a6a6a" w="165">support@rushbrush.com</fit-text></div>
<svg class="chat" viewBox="0 0 60 60"><path d="M28.500 16C20 16 14 21 14 28q0 5 5 9-1 3-3.500 5 6 .5 9-2.500l4 .5C37 40 43 35 43 28S37 16 28.500 16z" fill="#2f2f31"/><path d="M37.500 26.500c-5.500 0-9.500 3.500-9.500 8s4 8 9.500 8l2-.3q2.500 2.300 7 2-2-1.500-2.500-3.500 3-2.500 3-6.200c0-4.500-4-8-9.500-8z" fill="#2f2f31" stroke="#f2dd2c" stroke-width="2"/></svg>`);

/* ---------- scroll bar ---------- */
def("scroll-bar", `
<style>
:host{display:flex;flex-direction:column;align-items:center;width:15px;flex:none;background:#f1f1f1}
i{display:block;width:11px;height:635px;background:#c1c1c1;margin:5px 0 255px}
svg{display:block}
</style>
<svg style="margin-top:5px" width="7" height="5" viewBox="0 0 7 5"><path d="M0 5h7L3.500 0z" fill="#a3a3a3"/></svg><i></i>
<svg width="8" height="5" viewBox="0 0 8 5"><path d="M0 0h8L4 5z" fill="#505050"/></svg>`);

/* ---------- downloads ---------- */
def("download-bar", `
<style>
:host{display:flex;align-items:center;height:49px;box-sizing:border-box;flex:none;background:#f2f1f0;border-top:1px solid #c9c7c5;padding-left:20px;color:#4b4a48;font-size:15px}
svg{display:block;flex:none}
.l{width:1px;height:38px;background:#d0cecc;margin-left:18px}
.b{margin:-1px 0 0 1486px;width:90px;height:30px;box-sizing:border-box;border:1px solid #9b9997;border-radius:3px;background:#e2e1df;display:flex;align-items:center;justify-content:center;font:500 14px/28px "Noto Sans"}
.b fit-text{margin-top:-1px}
</style>
<svg style="margin-top:-2px" width="16" height="16" viewBox="0 0 16 16"><path d="M2 2h12l2 4v8H0V6z" fill="#c39a5f"/><path d="M2 2h12l2 4H0z" fill="#dcbf8e"/><path d="M.4 6h15.200v8H.4z" fill="#b58a50" stroke="#8e6a3a" stroke-width=".8"/><path d="M6 6h4v3H6z" fill="#eee0c4"/></svg>
<fit-text style="margin-left:13px" w="138">WasteMarche....rar</fit-text>
<svg style="margin-left:15px" width="10" height="6" viewBox="0 0 10 6"><path d="M1 5.300l4-4 4 4" fill="none" stroke="#5a5957" stroke-width="1.500"/></svg>
<div class="l"></div>
<div class="b"><fit-text w="58">Show all</fit-text></div>
<svg style="margin:-1px 0 0 13px" width="10" height="10" viewBox="0 0 10 10"><path d="M1 1l8 8M9 1L1 9" stroke="#80807e" stroke-width="2"/></svg>`);

/* Sets a run of text to a given width, by tracking or (with "scale") by horizontal scaling. */
def("fit-text", `
<style>:host{display:block;flex:none;white-space:nowrap}span{display:inline-block;transform-origin:0 50%;vertical-align:top}</style><span><slot></slot></span>`, (el, r) => {
  const s = r.querySelector("span"), w = +el.getAttribute("w"), n = el.textContent.length;
  el.style.width = w + "px";
  const nat = s.getBoundingClientRect().width;
  if (el.hasAttribute("scale")) s.style.transform = `scaleX(${w / nat})`;
  else if (n > 1) s.style.letterSpacing = ((w - nat) / (n - 1)).toFixed(3) + "px";
});
</script>
</body>
</html>
